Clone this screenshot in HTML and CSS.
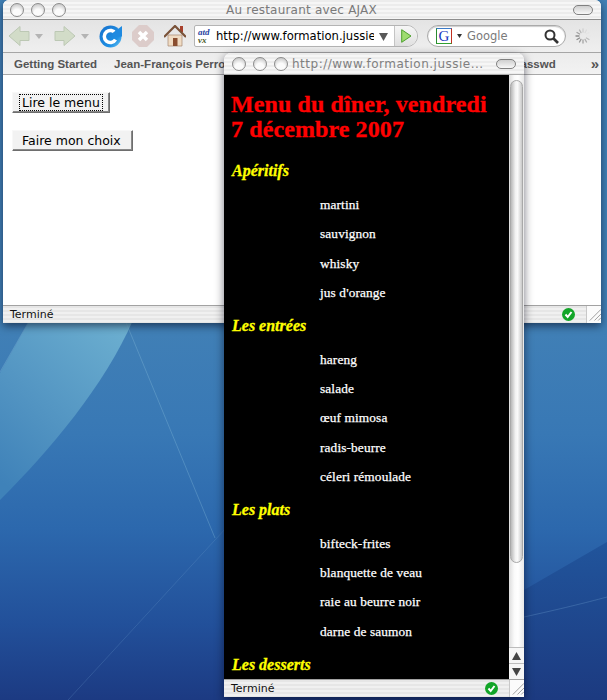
FILE: index.html
```html
<!DOCTYPE html>
<html lang="fr">
<head>
<meta charset="utf-8">
<title>Au restaurant avec AJAX</title>
<link rel="stylesheet" href="styles.css">
</head>
<body>
<div class="desktop">
  <svg class="wallpaper" width="607" height="700" viewBox="0 0 607 700">
    <defs>
      <linearGradient id="sky" x1="0" y1="320" x2="0" y2="700" gradientUnits="userSpaceOnUse">
        <stop offset="0" stop-color="#4180b6"/>
        <stop offset="0.3" stop-color="#3878b5"/>
        <stop offset="0.55" stop-color="#2c68ad"/>
        <stop offset="0.8" stop-color="#22509a"/>
        <stop offset="1" stop-color="#1c3a82"/>
      </linearGradient>
      <linearGradient id="wave" x1="130" y1="330" x2="0" y2="480" gradientUnits="userSpaceOnUse">
        <stop offset="0" stop-color="#6cafd0"/>
        <stop offset="0.6" stop-color="#5294c2"/>
        <stop offset="1" stop-color="#3f82b9"/>
      </linearGradient>
      <linearGradient id="deep" x1="0" y1="540" x2="0" y2="700" gradientUnits="userSpaceOnUse">
        <stop offset="0" stop-color="#21559c"/>
        <stop offset="1" stop-color="#1c3a80"/>
      </linearGradient>
      <linearGradient id="reload-blue" x1="0" y1="0" x2="1" y2="1">
        <stop offset="0" stop-color="#1670cc"/>
        <stop offset="0.7" stop-color="#1f90e4"/>
        <stop offset="1" stop-color="#7cd0f4"/>
      </linearGradient>
    </defs>
    <rect width="607" height="700" fill="url(#sky)"/>
    <path d="M30 320H133C105 385 50 450 0 500V373Z" fill="url(#wave)"/>
    <path d="M28 323L0 372M125 320L215 538" stroke="#8cc0dc" stroke-opacity=".32" fill="none"/>
    <path d="M226 528L68 700" stroke="#6a9ccc" stroke-opacity=".25" fill="none"/>
    <path d="M524 590L607 542V700H524Z" fill="url(#deep)"/>
    <path d="M524 617C560 609 585 603 607 597" stroke="#5f8fc4" stroke-opacity=".4" fill="none"/>
  </svg>

  <section class="window main-window">
    <header class="titlebar main-title">
      <div class="lights">
        <span class="light"></span><span class="light"></span><span class="light"></span>
      </div>
      <span class="title-text">Au restaurant avec AJAX</span>
      <span class="pill"></span>
    </header>
    <nav class="toolbar">
      <svg class="icon" width="22" height="22" viewBox="0 0 22 22"><path d="M1 11L12 1.500V6.500H21V15.500H12V20.500Z" fill="#d2dcc8" stroke="#bcc8b4"/></svg>
      <svg class="mini-arrow" width="8" height="5" viewBox="0 0 8 5"><path d="M0 0H8L4 5Z" fill="#b4b4b4"/></svg>
      <svg class="icon forward" width="22" height="22" viewBox="0 0 22 22"><path d="M21 11L10 1.500V6.500H1V15.500H10V20.500Z" fill="#d2dcc8" stroke="#bcc8b4"/></svg>
      <svg class="mini-arrow" width="8" height="5" viewBox="0 0 8 5"><path d="M0 0H8L4 5Z" fill="#b4b4b4"/></svg>
      <svg class="icon reload" width="24" height="24" viewBox="0 0 24 24">
        <circle cx="11.500" cy="12.500" r="11" fill="url(#reload-blue)"/>
        <path d="M16.500 9.500A6 6 0 1 0 16.500 15.500" fill="none" stroke="#fff" stroke-width="3.500"/>
        <path d="M13.500 9L23 2V12.500H13.500Z" fill="#1f8ae0"/>
      </svg>
      <svg class="icon stop" width="22" height="22" viewBox="0 0 22 22">
        <path d="M7 0H15L22 7V15L15 22H7L0 15V7Z" fill="#dcccca"/>
        <path d="M7 7L15 15M15 7L7 15" stroke="#fff" stroke-width="3.500"/>
      </svg>
      <svg class="icon home" width="22" height="22" viewBox="0 0 22 22">
        <rect x="16" y="1" width="3" height="6" fill="#a8402c"/>
        <path d="M4 10H18V21H4Z" fill="#f0dcc4" stroke="#a88870" stroke-width=".7"/>
        <path d="M0 12L11 1L22 12" fill="none" stroke="#7a5238" stroke-width="2.200"/>
        <rect x="9" y="13" width="4.500" height="8" fill="#8a4e30"/>
      </svg>
      <div class="url-field">
        <span class="site-icon"><b>atd</b><b class="site-vx">vx</b></span>
        <span class="url-text">http://www.formation.jussie</span>
        <svg class="url-drop" width="9" height="9" viewBox="0 0 9 9"><path d="M0 1H9L4.500 9Z" fill="#585858"/></svg>
        <span class="go-button">
          <svg width="11" height="14" viewBox="0 0 11 14"><path d="M.7 .7L10 7L.7 13.300Z" fill="#9edc70" stroke="#4ca02c"/></svg>
        </span>
      </div>
      <div class="search-field">
        <span class="google-g">G</span>
        <svg width="5" height="4" viewBox="0 0 5 4"><path d="M0 0H5L2.500 4Z" fill="#333"/></svg>
        <span class="search-text">Google</span>
        <svg class="magnifier" width="15" height="15" viewBox="0 0 15 15">
          <circle cx="6" cy="6" r="4.500" fill="none" stroke="#333" stroke-width="2"/>
          <path d="M9.500 9.500L14 14" stroke="#333" stroke-width="2.600"/>
        </svg>
      </div>
      <svg class="spinner" width="16" height="16" viewBox="0 0 16 16" stroke-width="1.300" stroke-linecap="round">
        <path d="M8 1V4" stroke="#cfcfcf"/><path d="M11.500 2L10 4.600" stroke="#dcdcdc"/><path d="M14 4.500L11.400 6" stroke="#e4e4e4"/><path d="M15 8H12" stroke="#e8e8e8"/><path d="M14 11.500L11.400 10" stroke="#bcbcbc"/><path d="M11.500 14L10 11.400" stroke="#b0b0b0"/><path d="M8 15V12" stroke="#a4a4a4"/><path d="M4.500 14L6 11.400" stroke="#989898"/><path d="M2 11.500L4.600 10" stroke="#8c8c8c"/><path d="M1 8H4" stroke="#8c8c8c"/><path d="M2 4.500L4.600 6" stroke="#a0a0a0"/><path d="M4.500 2L6 4.600" stroke="#b8b8b8"/>
      </svg>
    </nav>
    <div class="bookmarks">
      <span class="bookmark">Getting Started</span>
      <span class="bookmark">Jean-François Perrot</span>
      <span class="bookmark last-bookmark">passwd</span>
      <span class="more">»</span>
    </div>
    <main class="page">
      <button class="old-button focused"><span>Lire le menu</span></button>
      <button class="old-button">Faire mon choix</button>
    </main>
    <footer class="statusbar">
      <span class="status-text">Terminé</span>
      <svg class="check" width="13" height="13" viewBox="0 0 13 13"><circle cx="6.500" cy="6.500" r="6.500" fill="#12a528"/><path d="M3.500 6.500L5.700 9L9.500 4" fill="none" stroke="#fff" stroke-width="2"/></svg>
      <span class="grip"><svg width="15" height="15" viewBox="0 0 15 15"><path d="M3 15L15 3M8 15L15 8M12 15L15 12" stroke="#999" fill="none"/></svg></span>
    </footer>
  </section>

  <section class="window popup">
    <header class="titlebar popup-title">
      <div class="lights">
        <span class="light"></span><span class="light"></span><span class="light"></span>
      </div>
      <span class="popup-url">http://www.formation.jussie...</span>
      <span class="pill"></span>
    </header>
    <div class="popup-body">
      <article class="menu">
        <h1>Menu du dîner, vendredi<br>7 décembre 2007</h1>
        <h2>Apéritifs</h2>
        <p>martini</p><p>sauvignon</p><p>whisky</p><p>jus d'orange</p>
        <h2>Les entrées</h2>
        <p>hareng</p><p>salade</p><p>œuf mimosa</p><p>radis-beurre</p><p>céleri rémoulade</p>
        <h2>Les plats</h2>
        <p>bifteck-frites</p><p>blanquette de veau</p><p>raie au beurre noir</p><p>darne de saumon</p>
        <h2>Les desserts</h2>
      </article>
      <aside class="scrollbar">
        <div class="thumb"></div>
        <div class="scroll-arrows">
          <span class="scroll-btn"><svg width="9" height="8" viewBox="0 0 9 8"><path d="M4.500 0L9 8H0Z" fill="#444"/></svg></span>
          <span class="scroll-btn"><svg width="9" height="8" viewBox="0 0 9 8"><path d="M0 0H9L4.500 8Z" fill="#444"/></svg></span>
        </div>
      </aside>
    </div>
    <footer class="statusbar popup-status">
      <span class="status-text">Terminé</span>
      <svg class="check" width="13" height="13" viewBox="0 0 13 13"><circle cx="6.500" cy="6.500" r="6.500" fill="#12a528"/><path d="M3.500 6.500L5.700 9L9.500 4" fill="none" stroke="#fff" stroke-width="2"/></svg>
      <span class="grip"><svg width="15" height="15" viewBox="0 0 15 15"><path d="M3 15L15 3M8 15L15 8M12 15L15 12" stroke="#999" fill="none"/></svg></span>
    </footer>
  </section>
</div>
</body>
</html>
```
FILE: styles.css
```css
* { box-sizing: border-box; }
html, body { margin: 0; padding: 0; }
body { font-family: "DejaVu Sans", sans-serif; overflow: hidden; }
.desktop { position: relative; width: 607px; height: 700px; overflow: hidden; background: #2c68ad; }
.wallpaper { position: absolute; left: 0; top: 0; }
.window { position: absolute; display: flex; flex-direction: column; background: #fff; }
.main-window { left: 3px; top: 0; width: 598px; height: 323px; border-radius: 6px 6px 0 0; box-shadow: 0 3px 9px rgba(0,0,20,.55); }
.popup { left: 224px; top: 53px; width: 300px; height: 644px; border-radius: 7px 7px 0 0; box-shadow: 0 3px 10px rgba(0,0,20,.55); }

.titlebar { display: flex; align-items: center; flex: none; background: repeating-linear-gradient(#ececec 0 2px, #f6f6f6 2px 4px); }
.main-title { height: 20px; padding: 0 8px 0 7px; border-radius: 6px 6px 0 0; position: relative; border-bottom: 1px solid #8e8e8e; }
.popup-title { height: 22px; padding: 0 8px; border-radius: 7px 7px 0 0; border-bottom: 1px solid #aaa; }
.lights { display: flex; gap: 7px; flex: none; }
.light { width: 14px; height: 14px; border-radius: 50%; border: 1px solid #8b8b8b; background: radial-gradient(circle at 50% 75%, #fbfbfb 0 35%, #d2d2d2 75%, #bcbcbc); }
.title-text { flex: 1; text-align: center; font-size: 12px; letter-spacing: .2px; color: #7a7a7a; margin-right: 36px; }
.pill { flex: none; width: 20px; height: 10px; border-radius: 5px; border: 1px solid #808080; background: linear-gradient(#cfcfcf, #f8f8f8); }
.popup-url { flex: 1; font-size: 12px; letter-spacing: .5px; color: #808080; margin-left: 4px; white-space: nowrap; }

.toolbar { display: flex; align-items: center; height: 33px; flex: none; padding: 0 0 0 5px; background: linear-gradient(#e4e4e4, #efefef); border-bottom: 1px solid #a6a6a6; }
.icon { flex: none; }
.mini-arrow { flex: none; margin: 0 0 0 5px; }
.forward { margin-left: 11px; }
.reload { margin-left: 10px; }
.stop { margin-left: 9px; }
.home { margin-left: 10px; }
.url-field { display: flex; align-items: center; width: 224px; height: 22px; margin-left: 8px; background: #fff; border: 1px solid #b4b4b4; border-radius: 2px 11px 11px 2px; overflow: hidden; flex: none; }
.site-icon { width: 16px; height: 16px; margin-left: 3px; display: flex; flex-direction: column; flex: none; font: italic bold 9px/8px "Liberation Serif", serif; color: #2a3f9f; }
.site-vx { color: #4a5a2a; }
.url-text { width: 158px; margin-left: 2px; overflow: hidden; white-space: nowrap; font-size: 11.600px; color: #000; flex: none; }
.url-drop { margin-left: 5px; flex: none; }
.go-button { margin-left: 6px; flex: 1; height: 100%; display: flex; align-items: center; padding-left: 6px; background: linear-gradient(#f6f6f6, #e0e0e0); border-left: 1px solid #c4c4c4; }
.search-field { display: flex; align-items: center; width: 139px; height: 22px; margin-left: 9px; padding-left: 8px; background: #fff; border: 1px solid #aaa; border-radius: 11px; flex: none; box-shadow: inset 0 1px 1px #ccc; }
.google-g { width: 16px; height: 16px; font: 15px/14px "Liberation Serif", serif; text-align: center; color: #1a35c0; border: 1px solid; border-color: #3a7ac8 #c03020 #30a030 #2a8a30; margin-right: 5px; }
.search-text { margin-left: 5px; font-size: 11.500px; color: #7a7a7a; flex: 1; }
.magnifier { margin-right: 6px; flex: none; }
.spinner { margin-left: 9px; flex: none; }

.bookmarks { display: flex; align-items: center; height: 22px; flex: none; padding-left: 11px; background: linear-gradient(#ececec, #f2f2f2); border-bottom: 1px solid #a8a8a8; font-family: "Liberation Sans", sans-serif; font-size: 11.500px; font-weight: 700; color: #555; white-space: nowrap; }
.bookmark { margin-right: 17px; }
.last-bookmark { margin-left: auto; margin-right: 35px; }
.more { font-size: 15px; margin-right: 2px; line-height: 14px; }

.page { flex: 1; display: flex; flex-direction: column; align-items: flex-start; padding: 17px 0 0 9px; gap: 17px; background: #fff; }
.old-button { height: 21px; padding: 0 11px 0 9px; background: #f2f2f2; border: 1px solid; border-color: #f8f8f8 #6e6e6e #6e6e6e #f8f8f8; box-shadow: inset -1px -1px 0 #8a8a8a; font: 12.500px "DejaVu Sans", sans-serif; color: #000; }
.focused { padding: 0 6px; }
.focused span { display: block; padding: 0 2px; border: 1px dotted #000; line-height: 15px; }

.statusbar { display: flex; align-items: center; height: 18px; flex: none; background: repeating-linear-gradient(#e6e6e6 0 2px, #f0f0f0 2px 4px); border-top: 1px solid #a2a2a2; font-size: 11px; color: #111; padding-left: 7px; }
.status-text { flex: 1; }
.check { flex: none; margin-right: 11px; }
.grip { flex: none; width: 15px; height: 100%; background: #fbfbfb; border-left: 1px solid #c8c8c8; display: flex; }

.popup-body { flex: 1; display: flex; min-height: 0; }
.menu { flex: 1; background: #000; overflow: hidden; padding: 0 7px; font-family: "Liberation Serif", serif; color: #fff; }
.menu h1 { margin: 17px 0 0; font-size: 24px; line-height: 25px; font-weight: 700; color: #f00; letter-spacing: .1px; -webkit-text-stroke: .3px #f00; }
.menu h2 { margin: 0; padding: 17px 0 17px 1px; font-size: 16px; line-height: 18px; font-weight: 700; font-style: italic; color: #ff0; -webkit-text-stroke: .3px #ff0; }
.menu h1 + h2 { padding-top: 20px; }
.menu p { margin: 0 0 14.250px 89px; font-size: 13.330px; letter-spacing: .12px; line-height: 15px; font-weight: 400; -webkit-text-stroke: .25px #fff; }
.menu p + h2 { margin-top: -14.250px; }

.scrollbar { flex: none; width: 15px; display: flex; flex-direction: column; background: linear-gradient(90deg, #dcdcdc, #fafafa 35%, #fff 60%, #e8e8e8); }
.thumb { flex: none; margin: 5px 1px 0 1px; height: 483px; border-radius: 7px; border: 1px solid #a8a8a8; background: linear-gradient(90deg, #b8b8b8, #f2f2f2 40%, #fafafa 60%, #c8c8c8); }
.scroll-arrows { margin-top: auto; display: flex; flex-direction: column; background: #f6f6f6; }
.scroll-btn { height: 16px; display: flex; align-items: center; justify-content: center; border-top: 1px solid #bcbcbc; }
```
